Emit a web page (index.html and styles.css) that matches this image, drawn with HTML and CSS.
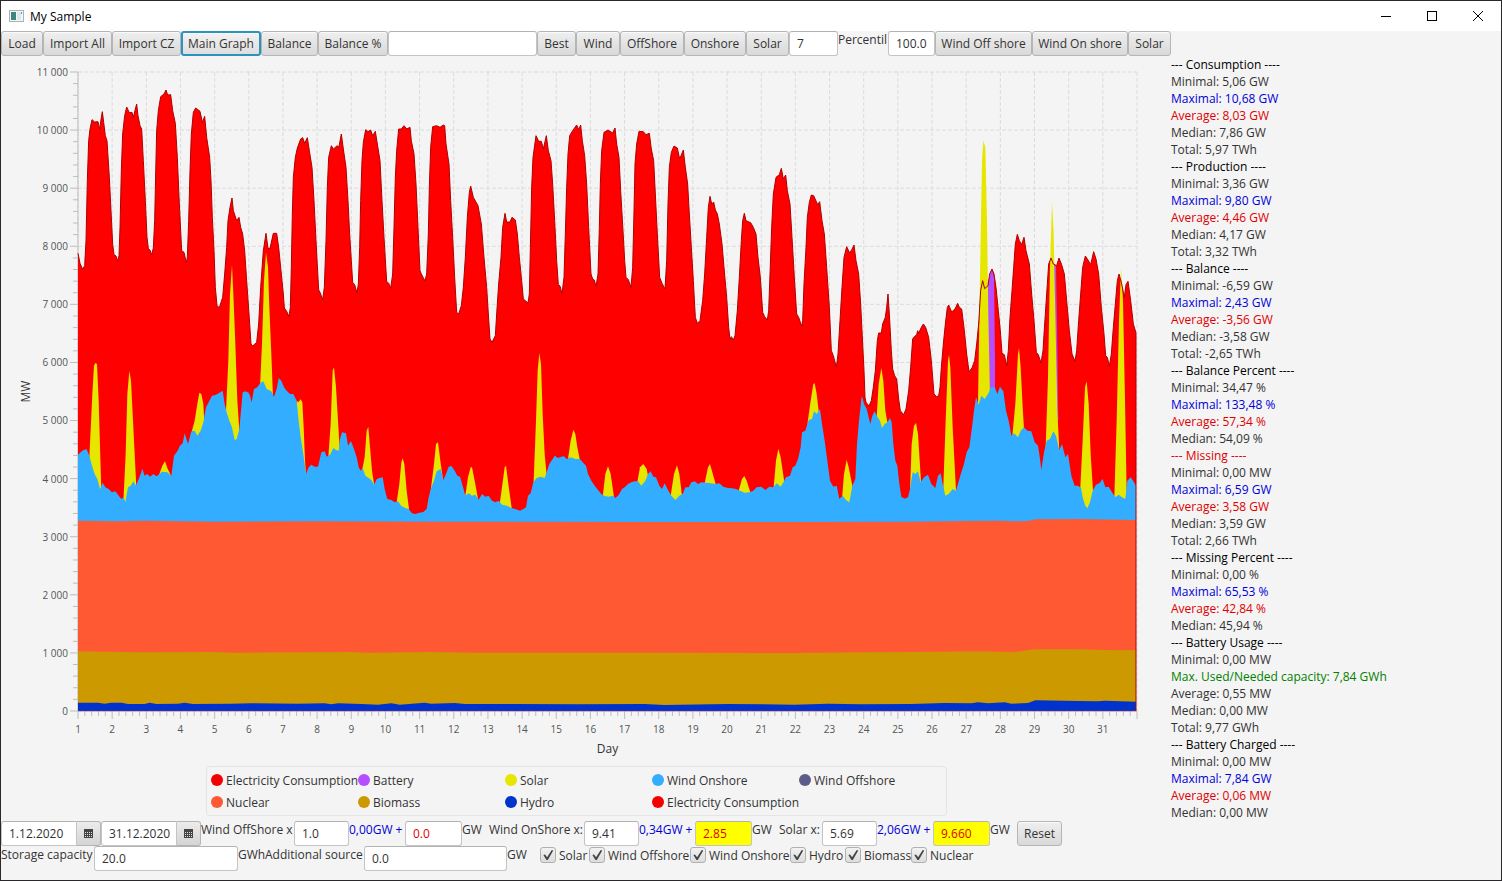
FILE: index.html
```html
<!DOCTYPE html>
<html lang="en">
<head>
<meta charset="utf-8">
<title>My Sample</title>
<link rel="stylesheet" href="styles.css">
</head>
<body>
<div class="window">
  <header class="titlebar">
    <svg class="app-icon" width="15" height="12" viewBox="0 0 15 12" aria-hidden="true">
      <rect x="0.5" y="0.5" width="14" height="11" fill="#f4f6f7" stroke="#aab2b6"/>
      <rect x="2" y="2" width="5" height="8" fill="#3d857f"/>
      <rect x="8" y="2" width="4" height="8" fill="#dde6ea"/>
      <rect x="12" y="2" width="1" height="2" fill="#6b8f8c"/>
    </svg>
    <h1 class="title">My Sample</h1>
    <div class="window-buttons">
      <button class="window-button" aria-label="Minimize"><svg width="12" height="12" viewBox="0 0 12 12"><path d="M1 6.5H11" stroke="#000" fill="none"/></svg></button>
      <button class="window-button" aria-label="Maximize"><svg width="12" height="12" viewBox="0 0 12 12"><rect x="1.5" y="1.5" width="9" height="9" stroke="#000" fill="none"/></svg></button>
      <button class="window-button" aria-label="Close"><svg width="12" height="12" viewBox="0 0 12 12"><path d="M1 1L11 11M11 1L1 11" stroke="#000" fill="none"/></svg></button>
    </div>
  </header>

  <div class="toolbar">
    <button class="btn">Load</button>
    <button class="btn">Import All</button>
    <button class="btn">Import CZ</button>
    <button class="btn focused">Main Graph</button>
    <button class="btn">Balance</button>
    <button class="btn">Balance %</button>
    <input class="field" type="text" aria-label="Name">
    <button class="btn">Best</button>
    <button class="btn">Wind</button>
    <button class="btn">OffShore</button>
    <button class="btn">Onshore</button>
    <button class="btn">Solar</button>
    <input class="field" type="text" value="7" aria-label="Count">
    <label class="caption" for="percentil">Percentil</label>
    <input class="field" type="text" id="percentil" value="100.0">
    <button class="btn">Wind Off shore</button>
    <button class="btn">Wind On shore</button>
    <button class="btn">Solar</button>
  </div>

  <main class="main">
    <section class="chart">
      <div class="chart-body">
        <div class="y-title"><span>MW</span></div>
        <div class="y-labels">
          <span>11 000</span><span>10 000</span><span>9 000</span><span>8 000</span><span>7 000</span><span>6 000</span><span>5 000</span><span>4 000</span><span>3 000</span><span>2 000</span><span>1 000</span><span>0</span>
        </div>
        <svg class="plot" id="plot" viewBox="0 34 3177 1917" preserveAspectRatio="none" role="img" aria-label="Production and consumption by day"></svg>
        <div class="x-axis">
          <div class="x-labels">
            <span>1</span><span>2</span><span>3</span><span>4</span><span>5</span><span>6</span><span>7</span><span>8</span><span>9</span><span>10</span><span>11</span><span>12</span><span>13</span><span>14</span><span>15</span><span>16</span><span>17</span><span>18</span><span>19</span><span>20</span><span>21</span><span>22</span><span>23</span><span>24</span><span>25</span><span>26</span><span>27</span><span>28</span><span>29</span><span>30</span><span>31</span>
          </div>
          <div class="x-title">Day</div>
        </div>
      </div>
      <ul class="legend">
        <li class="consumption">Electricity Consumption</li>
        <li class="battery">Battery</li>
        <li class="solar">Solar</li>
        <li class="onshore">Wind Onshore</li>
        <li class="offshore">Wind Offshore</li>
        <li class="nuclear">Nuclear</li>
        <li class="biomass">Biomass</li>
        <li class="hydro">Hydro</li>
        <li class="consumption">Electricity Consumption</li>
      </ul>
    </section>

    <aside class="stats">
      <p class="head">--- Consumption ----</p>
      <p>Minimal: 5,06 GW</p>
      <p class="max">Maximal: 10,68 GW</p>
      <p class="avg">Average: 8,03 GW</p>
      <p>Median: 7,86 GW</p>
      <p>Total: 5,97 TWh</p>
      <p class="head">--- Production ----</p>
      <p>Minimal: 3,36 GW</p>
      <p class="max">Maximal: 9,80 GW</p>
      <p class="avg">Average: 4,46 GW</p>
      <p>Median: 4,17 GW</p>
      <p>Total: 3,32 TWh</p>
      <p class="head">--- Balance ----</p>
      <p>Minimal: -6,59 GW</p>
      <p class="max">Maximal: 2,43 GW</p>
      <p class="avg">Average: -3,56 GW</p>
      <p>Median: -3,58 GW</p>
      <p>Total: -2,65 TWh</p>
      <p class="head">--- Balance Percent ----</p>
      <p>Minimal: 34,47 %</p>
      <p class="max">Maximal: 133,48 %</p>
      <p class="avg">Average: 57,34 %</p>
      <p>Median: 54,09 %</p>
      <p class="avg">--- Missing ----</p>
      <p>Minimal: 0,00 MW</p>
      <p class="max">Maximal: 6,59 GW</p>
      <p class="avg">Average: 3,58 GW</p>
      <p>Median: 3,59 GW</p>
      <p>Total: 2,66 TWh</p>
      <p class="head">--- Missing Percent ----</p>
      <p>Minimal: 0,00 %</p>
      <p class="max">Maximal: 65,53 %</p>
      <p class="avg">Average: 42,84 %</p>
      <p>Median: 45,94 %</p>
      <p class="head">--- Battery Usage ----</p>
      <p>Minimal: 0,00 MW</p>
      <p class="capacity">Max. Used/Needed capacity: 7,84 GWh</p>
      <p>Average: 0,55 MW</p>
      <p>Median: 0,00 MW</p>
      <p>Total: 9,77 GWh</p>
      <p class="head">--- Battery Charged ----</p>
      <p>Minimal: 0,00 MW</p>
      <p class="max">Maximal: 7,84 GW</p>
      <p class="avg">Average: 0,06 MW</p>
      <p>Median: 0,00 MW</p>
    </aside>
  </main>

  <footer class="controls">
    <div class="row sources">
      <div class="date">
        <input class="field" type="text" value="1.12.2020" aria-label="From">
        <button class="date-button" aria-label="Pick start date"><svg width="9" height="9" viewBox="0 0 9 9"><path d="M0 0H9V9H0Z" fill="#444"/><path d="M1 3.5H8M1 5.5H8M1 7.5H8" stroke="#ddd" stroke-dasharray="1 1"/></svg></button>
      </div>
      <div class="date">
        <input class="field" type="text" value="31.12.2020" aria-label="To">
        <button class="date-button" aria-label="Pick end date"><svg width="9" height="9" viewBox="0 0 9 9"><path d="M0 0H9V9H0Z" fill="#444"/><path d="M1 3.5H8M1 5.5H8M1 7.5H8" stroke="#ddd" stroke-dasharray="1 1"/></svg></button>
      </div>
      <label class="caption" for="off-x">Wind OffShore x</label>
      <input class="field" type="text" id="off-x" value="1.0">
      <label class="caption max" for="off-gw">0,00GW +</label>
      <input class="field red" type="text" id="off-gw" value="0.0">
      <span class="caption">GW</span>
      <label class="caption" for="on-x">Wind OnShore x:</label>
      <input class="field" type="text" id="on-x" value="9.41">
      <label class="caption max" for="on-gw">0,34GW +</label>
      <input class="field red changed" type="text" id="on-gw" value="2.85">
      <span class="caption">GW</span>
      <label class="caption" for="solar-x">Solar x:</label>
      <input class="field" type="text" id="solar-x" value="5.69">
      <label class="caption max" for="solar-gw">2,06GW +</label>
      <input class="field red changed" type="text" id="solar-gw" value="9.660">
      <span class="caption">GW</span>
      <button class="btn">Reset</button>
    </div>
    <div class="row storage">
      <label class="caption" for="capacity">Storage capacity</label>
      <input class="field" type="text" id="capacity" value="20.0">
      <span class="caption">GWh</span>
      <label class="caption" for="additional">Additional source</label>
      <input class="field" type="text" id="additional" value="0.0">
      <span class="caption">GW</span>
      <label class="check"><input type="checkbox" checked>Solar</label>
      <label class="check"><input type="checkbox" checked>Wind Offshore</label>
      <label class="check"><input type="checkbox" checked>Wind Onshore</label>
      <label class="check"><input type="checkbox" checked>Hydro</label>
      <label class="check"><input type="checkbox" checked>Biomass</label>
      <label class="check"><input type="checkbox" checked>Nuclear</label>
    </div>
  </footer>
</div>
<script src="chart.js"></script>
</body>
</html>
```
FILE: styles.css
```css
* { box-sizing: border-box; }

body {
  margin: 0;
  font-family: "Open Sans", "Noto Sans", sans-serif;
  font-size: 12px;
  line-height: 17px;
  color: #333;
}

button, input {
  font: inherit;
  color: inherit;
}

.window {
  display: flex;
  flex-direction: column;
  min-height: 100vh;
  border: 1px solid #2b282b;
  background: #f4f4f4;
}

/* Title bar */
.titlebar {
  display: flex;
  align-items: center;
  gap: 6px;
  height: 30px;
  padding-left: 8px;
  background: #fff;
}
.app-icon { margin-bottom: 1px; }
.title {
  flex: 1;
  margin: 0;
  font-size: 12px;
  font-weight: 400;
  color: #000;
}
.window-buttons { display: flex; }
.window-button {
  display: grid;
  place-items: center;
  width: 46px;
  height: 30px;
  padding: 0;
  border: 0;
  background: none;
}

/* Controls shared by the top and bottom bars */
.toolbar, .row {
  display: grid;
  justify-content: start;
  grid-auto-rows: 25px;
  white-space: nowrap;
}
.toolbar {
  grid-template-columns: 42px 69px 69px 80px 57px 70px 149px 39px 44px 64px 62px 43px 49px 50px 47px 97px 96px 43px;
}
.btn {
  min-width: 0;
  padding: 0;
  border: 1px solid #b5b5b5;
  border-radius: 3px;
  background: linear-gradient(#efefef, #d9d9d9);
  box-shadow: inset 0 1px #fafafa;
}
.btn.focused {
  border: 2px solid #2a94be;
  background: linear-gradient(#f2f2f2, #dedede);
}
.field {
  min-width: 0;
  width: 100%;
  height: 25px;
  padding: 0 0 0 7px;
  border: 1px solid #c4c4c4;
  border-top-color: #b2b2b2;
  border-radius: 3px;
  background: #fff;
}
.field.red { color: #e00000; }
.field.changed { background: #ff0; }

/* Main area */
.main {
  display: flex;
  flex: 1;
}
.chart {
  display: flex;
  flex: 1;
  flex-direction: column;
  min-width: 0;
  padding: 16px 19px 5px 0;
}
.chart-body {
  display: grid;
  flex: 1;
  grid-template-columns: 50px 17px 1fr;
  grid-template-rows: 1fr auto;
  padding-right: 15px;
}
.y-title {
  display: grid;
  place-items: center;
}
.y-title span { transform: rotate(-90deg); }
.y-labels {
  display: flex;
  flex-direction: column;
  justify-content: space-between;
  align-items: flex-end;
  margin: -6px 0;
  font-size: 10px;
  line-height: 12px;
  color: #555;
  white-space: nowrap;
}
.plot {
  display: block;
  width: calc(100% - 10px);
  height: 100%;
  min-height: 0;
  margin-left: 10px;
  overflow: visible;
}
.x-axis {
  grid-column: 3;
  margin-left: 10px;
  padding-top: 11px;
}
.x-labels {
  display: grid;
  grid-template-columns: repeat(31, 1fr);
  margin: 0 calc(100% / 62) 0 calc(-100% / 62);
  font-size: 10px;
  line-height: 14px;
  text-align: center;
  color: #555;
}
.x-title {
  padding: 4px 0 9px;
  text-align: center;
}

.legend {
  display: grid;
  align-self: center;
  grid-template-columns: repeat(5, 147px);
  grid-auto-rows: 22px;
  align-items: center;
  margin: 0;
  padding: 2px 0 2px 4px;
  border: 1px solid #e4e4e4;
  border-radius: 4px;
  list-style: none;
  white-space: nowrap;
}
.legend li {
  display: flex;
  align-items: center;
  gap: 3px;
}
.legend li::before {
  content: "";
  flex: none;
  width: 12px;
  height: 12px;
  border-radius: 50%;
  background: var(--series);
}
.consumption { --series: #f50000; }
.battery { --series: #b64dff; }
.solar { --series: #e6e600; }
.onshore { --series: #33adff; }
.offshore { --series: #5c5c8a; }
.nuclear { --series: #ff5933; }
.biomass { --series: #cc9900; }
.hydro { --series: #0033cc; }

/* Statistics */
.stats {
  flex: 0 0 330px;
}
.stats p { margin: 0; }
.head { color: #000; }
.max { color: #0000d8; }
.avg { color: #e00000; }
.capacity { color: #008000; }

/* Bottom bars */
.controls { padding-bottom: 9px; }
.sources {
  grid-template-columns: 100px 100px 93px 55px 56px 57px 27px 95px 55px 56px 57px 27px 43px 55px 56px 57px 27px 45px;
}
.storage {
  grid-template-columns: 93px 144px 27px 99px 143px 33px 49px 101px 100px 55px 66px 62px;
}
.date { display: flex; }
.date .field {
  width: 76px;
  border-radius: 3px 0 0 3px;
}
.date-button {
  display: grid;
  place-items: center;
  width: 24px;
  padding: 0;
  border: 1px solid #b5b5b5;
  border-left: 0;
  border-radius: 0 3px 3px 0;
  background: linear-gradient(#ececec, #d4d4d4);
}
.check {
  display: flex;
  align-items: center;
  gap: 3px;
  height: 18px;
}
.check input {
  display: grid;
  flex: none;
  place-items: center;
  width: 16px;
  height: 16px;
  margin: 0;
  border: 1px solid #b0b0b0;
  border-radius: 3px;
  background: linear-gradient(#f2f2f2, #dcdcdc);
  appearance: none;
}
.check input:checked::before {
  content: "";
  width: 11px;
  height: 10px;
  background: #444;
  clip-path: polygon(8% 50%, 22% 44%, 42% 72%, 84% 0, 98% 4%, 48% 100%, 36% 100%);
}

/* Plot */
.area { stroke: none; }
.grid {
  fill: none;
  stroke: #dcdcdc;
  stroke-dasharray: 4 2;
  vector-effect: non-scaling-stroke;
}
.ticks {
  fill: none;
  stroke: #bdbdbd;
  vector-effect: non-scaling-stroke;
}
.load-line {
  fill: none;
  stroke: #b00000;
  stroke-linejoin: round;
  vector-effect: non-scaling-stroke;
}
.base-line {
  fill: none;
  stroke: #4a2a9a;
  vector-effect: non-scaling-stroke;
}
```
FILE: chart.js
```js
// Curves are stored in four blocks of days; each block has its own x origin.
const ORIGINS = [-54, 756, 1566, 2346];
const BASE = 1951;
const TOP = 34;
const WIDTH = 3177;
const END = 3174;
const DAY = WIDTH / 31;

const load = [
  "54,578 60,608 68,626 74,615 78,540 82,360 86,240 90,205 96,177 104,184 114,183 119,206 124,170 127,153 131,185 136,225 141,240 148,350 153,450 158,550 162,582 168,586 173,601 177,585 180,500 184,330 188,220 194,165 200,139 208,156 216,155 220,170 226,145 230,130 234,165 240,195 245,205 250,300 256,420 261,530 265,563 271,570 275,583 280,562 284,480 287,340 290,210 295,150 302,108 312,100 318,88 323,103 332,102 338,150 346,188 352,290 358,430 365,570 372,575 379,606 382,590 386,480 390,330 394,220 400,155 407,142 420,152 427,185 434,167 440,230 449,290 453,360 457,470 462,570 466,680 471,735 478,741 488,710 494,640 500,560 504,480 510,440 516,412 520,450 530,480 537,470 542,500 548,520 554,570 560,660 567,760 573,850 578,856 590,845 596,790 602,680 610,570 618,518 624,563 630,563 640,518 650,518 656,560 664,640 670,700 673,742 680,752 687,768 691,740 694,620 697,460 700,350 706,290 712,262 722,235 728,231 734,248 742,231 748,270 756,320 762,420 768,540 776,688 780,695 788,717 793,680 798,540 802,380 806,290 814,255 820,265 832,255 836,262 844,220 850,265 858,320 864,420 869,520",
  "64,600 68,665 74,672 81,697 85,670 89,560 92,420 96,300 100,245 107,207 114,213 122,208 128,225 136,212 142,250 150,300 156,420 162,530 170,662 176,668 182,683 188,640 192,500 196,350 200,270 206,205 214,205 222,195 230,205 240,200 244,240 252,280 258,370 264,500 270,630 274,640 285,661 290,640 295,520 298,380 302,260 308,198 320,195 330,200 340,193 344,195 348,250 357,310 362,420 368,530 374,650 380,755 386,760 394,735 400,680 406,590 412,470 418,395 422,376 430,410 444,435 454,490 462,590 470,680 475,760 480,835 486,845 496,825 500,760 506,670 513,590 518,500 525,458 530,484 540,484 546,470 556,478 562,520 568,590 574,650 580,715 588,722 594,727 598,700 602,520 605,380 609,290 618,225 626,242 634,242 640,265 649,225 655,270 663,300 668,370 674,480 680,600 685,672 690,676 696,699 702,650 706,520 710,380 714,280 719,225 728,210 740,193 746,207 752,193 757,240 764,285 770,370 776,500 783,640 788,655 793,658 798,678 804,640 808,500 811,370 815,270 822,215 834,208 848,217 855,202 860,250 867,290 872,390 879,510",
  "74,600 78,650 85,657 93,680 98,620 102,450 105,310 110,250 117,212 130,213 138,222 148,218 154,265 161,300 166,400 172,520 179,650 186,668 195,685 200,600 204,430 208,320 214,275 222,256 232,262 239,295 250,268 256,320 263,370 268,460 274,560 280,660 286,770 292,788 300,780 308,720 314,640 320,530 325,440 330,407 335,430 341,424 346,448 352,460 358,490 366,550 372,620 380,710 386,800 390,836 394,828 400,838 405,825 412,750 418,650 424,540 428,480 433,458 438,480 452,486 460,500 468,520 474,590 481,650 488,755 494,768 502,778 506,750 510,640 515,500 520,400 528,350 538,342 544,323 550,355 557,343 562,390 570,430 576,530 583,650 590,760 596,770 605,797 608,780 612,670 618,560 622,470 628,425 634,403 641,405 653,432 659,423 666,480 673,520 680,620 688,740 694,870 700,885 709,920 714,880 720,780 726,680 732,590 740,558 748,575 754,570 762,553 768,600 776,640 782,730 788,850",
  "12,930 15,1010 18,1025 27,1036 34,1020 40,980 46,930 52,840 56,817 64,817 68,790 76,770 80,740 84,700 88,760 94,870 98,925 104,945 110,955 116,1015 121,1050 131,1062 138,1045 146,990 152,920 158,835 163,828 170,822 173,810 176,818 184,800 190,790 197,800 206,830 214,900 222,1000 230,1008 236,1005 240,980 244,920 250,850 256,790 262,740 266,733 275,754 285,745 293,728 298,740 305,745 313,810 320,880 327,933 336,922 344,900 350,850 356,790 362,690 368,660 374,684 384,675 389,640 396,625 402,640 408,680 415,750 421,810 426,878 433,882 440,915 445,870 450,770 456,690 461,620 466,550 472,521 478,540 485,552 492,530 498,570 508,610 515,700 522,780 529,875 535,882 543,907 549,870 554,790 560,700 566,610 573,592 580,610 590,615 597,592 605,612 613,640 620,720 628,810 636,880 645,902 650,870 656,780 662,700 668,620 676,586 684,598 692,612 701,573 708,595 716,640 724,740 732,820 737,885 742,890 748,917 754,880 760,800 766,730 772,660 777,640 784,665 793,710 798,672 804,662 812,720 820,790 828,817"
];

const wind = [
  "54,1182 60,1176 70,1168 80,1166 88,1185 96,1215 104,1240 112,1255 120,1285 128,1266 136,1280 146,1285 156,1295 166,1292 176,1305 184,1315 191,1310 196,1325 204,1280 212,1275 220,1262 228,1275 236,1255 242,1240 247,1224 254,1245 262,1240 270,1248 280,1240 290,1247 298,1240 306,1233 322,1235 334,1245 342,1185 352,1172 360,1155 368,1148 374,1118 384,1150 394,1112 404,1110 412,1125 422,1110 430,1085 438,1040 446,1025 456,1005 466,1003 476,998 488,990 494,1030 500,1055 508,1080 516,1100 524,1138 530,1135 538,1105 544,1040 548,995 556,992 566,996 570,1005 575,1025 582,985 592,980 600,968 610,962 620,985 634,992 642,1008 650,985 656,952 664,960 672,980 680,990 690,1000 700,1000 710,1020 716,1080 722,1130 730,1180 738,1240 746,1220 754,1212 764,1218 774,1218 784,1175 794,1172 800,1188 810,1182 820,1162 828,1168 836,1170 840,1135 846,1115 858,1118 864,1155 872,1142",
  "64,1144 72,1165 80,1190 86,1220 92,1230 98,1222 106,1245 116,1252 124,1258 132,1272 140,1256 148,1252 158,1250 164,1285 172,1315 184,1318 194,1325 204,1322 214,1336 226,1342 236,1345 246,1358 256,1360 268,1356 280,1354 290,1345 296,1310 304,1280 312,1260 320,1232 332,1225 340,1258 348,1240 356,1218 364,1216 374,1230 382,1245 390,1248 398,1275 406,1305 416,1298 426,1305 436,1302 446,1317 456,1300 466,1308 476,1305 486,1320 496,1325 506,1320 516,1332 530,1335 544,1342 556,1345 570,1350 580,1345 588,1340 594,1305 602,1298 610,1265 620,1252 632,1248 644,1252 650,1235 658,1210 668,1195 674,1185 684,1192 694,1188 702,1187 710,1195 722,1190 736,1195 750,1195 758,1205 768,1215 774,1240 784,1260 794,1275 804,1288 814,1300 824,1306 836,1308 848,1305 856,1312 866,1303 876,1285",
  "74,1280 84,1270 94,1265 104,1262 114,1262 124,1275 136,1260 144,1240 152,1232 160,1248 168,1250 178,1275 186,1285 194,1268 204,1288 214,1305 226,1318 238,1305 248,1300 256,1280 266,1280 274,1265 284,1262 294,1270 304,1265 318,1266 332,1268 346,1270 358,1268 370,1278 384,1282 396,1283 408,1285 420,1290 434,1296 448,1295 460,1290 470,1280 484,1278 496,1288 508,1278 520,1280 530,1268 542,1278 552,1262 558,1250 570,1245 578,1220 586,1215 594,1195 602,1160 606,1115 616,1110 626,1078 636,1075 642,1052 650,1060 660,1045 666,1090 674,1140 682,1200 690,1260 700,1278 710,1275 718,1315 728,1305 738,1318 748,1325 757,1275 766,1255 771,1150 778,1070 785,1008",
  "7,1010 12,1030 20,1045 31,1090 37,1065 44,1052 50,1065 60,1080 66,1102 74,1090 82,1085 90,1072 95,1085 100,1150 106,1200 112,1215 118,1270 124,1308 134,1314 144,1310 150,1285 158,1235 166,1240 174,1232 182,1265 192,1250 204,1242 214,1270 226,1282 234,1245 242,1238 248,1270 256,1305 266,1300 278,1285 288,1290 296,1262 304,1235 312,1210 320,1175 328,1160 336,1100 342,1050 348,1010 356,1032 364,1005 374,1015 384,1000 394,978 404,980 412,1000 420,978 430,992 438,1050 446,1080 454,1125 462,1118 474,1130 482,1110 492,1100 502,1110 514,1112 524,1145 534,1155 540,1195 544,1228 552,1175 560,1140 570,1135 580,1112 588,1125 598,1168 606,1150 616,1190 624,1180 634,1245 644,1275 654,1275 663,1282 668,1310 676,1335 682,1343 690,1325 698,1290 708,1272 718,1268 728,1255 736,1280 746,1278 756,1295 766,1310 776,1302 786,1310 796,1315 802,1260 812,1250 820,1262 828,1275"
];

// One hump of solar output per day.
const solar = [
  [
    "88,1190 97,1000 102,915 106,907 111,910 116,1020 121,1190 124,1290",
    "190,1325 197,1180 202,1000 208,930 213,960 218,1060 224,1180 229,1280",
    "298,1240 307,1215 315,1202 322,1222 333,1245",
    "396,1110 404,1080 412,1030 418,996 424,1000 430,1030 433,1085",
    "498,1050 505,900 510,700 516,612 520,700 526,850 532,1020 538,1110",
    "600,980 606,850 612,660 618,575 624,620 628,740 634,880 639,1010",
    "710,1020 715,1025 722,1016 727,1025 731,1100 735,1200 738,1240",
    "805,1190 812,1090 818,930 822,920 828,980 834,1080 840,1180"
  ],
  [
    "96,1230 104,1190 110,1110 115,1098 120,1160 126,1230 133,1275",
    "200,1325 208,1270 214,1205 218,1193 223,1210 230,1290 237,1345",
    "302,1290 312,1210 318,1150 324,1145 331,1200 338,1250",
    "406,1305 414,1250 422,1220 426,1220 434,1260 444,1315",
    "509,1330 516,1280 524,1220 528,1215 535,1270 545,1342",
    "611,1260 618,1080 623,930 628,877 633,910 638,1060 644,1180 650,1245",
    "714,1195 722,1140 730,1107 736,1120 742,1160 750,1200",
    "818,1310 826,1240 834,1217 842,1240 852,1310"
  ],
  [
    "110,1275 120,1220 130,1210 140,1225 145,1250",
    "212,1305 222,1240 231,1214 238,1240 246,1305",
    "314,1268 324,1220 330,1210 337,1235 347,1270",
    "416,1290 426,1255 433,1246 440,1260 451,1295",
    "521,1280 528,1200 535,1164 542,1190 553,1265",
    "623,1085 632,1020 640,970 644,968 650,1000 657,1060",
    "726,1315 732,1240 740,1197 746,1220 757,1275"
  ],
  [
    "50,1070 56,970 64,922 70,960 76,1050 83,1090",
    "150,1290 155,1150 162,1095 168,1087 174,1120 183,1265",
    "250,1280 257,1080 264,900 267,882 271,920 278,1100 288,1290",
    "354,1030 360,650 366,300 370,240 376,260 381,480 385,760 390,1010",
    "457,1125 466,1030 474,880 477,862 482,920 488,1040 492,1105",
    "557,1160 564,950 570,620 576,424 581,520 586,760 592,1050 598,1170",
    "661,1280 668,1140 675,980 680,962 686,1030 692,1180 699,1290",
    "763,1310 770,1080 777,780 783,622 789,720 795,1020 800,1300"
  ]
];

const battery = [
  "384,1010 384,670 389,640 396,628 402,650 405,900 405,1000",
  "582,615 588,616 591,800 595,1080 590,1080"
];

const nuclear = "0,1380 110,1382 200,1380 420,1383 700,1382 1100,1383 1700,1384 2150,1384 2500,1383 2660,1381 2770,1380 2800,1382 2850,1381 2872,1376 3000,1375 3174,1378";
const biomass = "0,1772 90,1773 180,1775 400,1774 480,1776 820,1774 870,1776 1050,1774 1200,1776 1700,1776 2150,1777 2350,1775 2500,1774 2700,1772 2810,1774 2872,1766 3000,1766 3080,1768 3174,1769";
const hydro = "0,1926 60,1926 80,1929 100,1926 130,1926 150,1930 200,1930 215,1926 235,1930 300,1929 320,1926 345,1930 460,1929 520,1928 660,1929 740,1928 760,1931 780,1928 850,1930 900,1932 940,1928 965,1932 1040,1926 1060,1929 1130,1927 1160,1930 1300,1930 1500,1931 1700,1930 1760,1933 1950,1930 2150,1932 2250,1929 2350,1931 2500,1930 2600,1927 2680,1928 2700,1925 2730,1928 2780,1925 2800,1929 2850,1927 2872,1919 3000,1921 3060,1922 3080,1920 3174,1923";

const plot = document.getElementById("plot");

function draw(className, d, fill) {
  const path = document.createElementNS("http://www.w3.org/2000/svg", "path");
  path.setAttribute("d", d);
  path.setAttribute("class", className);
  if (fill) path.setAttribute("fill", fill);
  plot.append(path);
}

function shift(points, origin) {
  return points.split(" ").map(p => {
    const [x, y] = p.split(",").map(Number);
    return (x + origin) + "," + y;
  }).join(" ");
}

// A hump stands on the nuclear band; the wind area covers its foot.
function hump(points) {
  const list = points.split(" ");
  const left = list[0].split(",")[0];
  const right = list[list.length - 1].split(",")[0];
  return `M${left},1380 L${points} L${right},1380Z`;
}

const joined = blocks => blocks.map((b, i) => shift(b, ORIGINS[i])).join(" ");
const area = line => `M0,${BASE} L${line} L${END},${BASE}Z`;

// Grid and tick marks
let grid = "";
let ticks = `M0,${TOP}V${BASE}H${WIDTH}`;
for (let d = 0; d <= 31 * 5; d++) {
  const x = d * DAY / 5;
  if (d % 5 === 0) grid += `M${x},${TOP}V${BASE}`;
  ticks += `M${x},${BASE}v${d % 5 ? 15 : 24}`;
}
for (let v = 0; v <= 55; v++) {
  const y = BASE - v * (BASE - TOP) / 55;
  if (v % 5 === 0) grid += `M0,${y}H${WIDTH}`;
  ticks += `M0,${y}h${v % 5 ? -15 : -24}`;
}
draw("grid", grid);
draw("ticks", ticks);

// Series, back to front
const loadLine = joined(load);
draw("area", area(loadLine), "#ff0000");
battery.forEach(b => draw("area", `M${shift(b, ORIGINS[3])}Z`, "#b64dff"));
solar.forEach((block, i) => block.forEach(s => draw("area", hump(shift(s, ORIGINS[i])), "#e6e600")));
draw("area", area(joined(wind)), "#33adff");
draw("area", area(nuclear), "#ff5933");
draw("area", area(biomass), "#cc9900");
draw("area", area(hydro), "#0033cc");
draw("base-line", `M0,${BASE - 1}H${END}`);
draw("load-line", `M${loadLine} V${BASE}`);
```
